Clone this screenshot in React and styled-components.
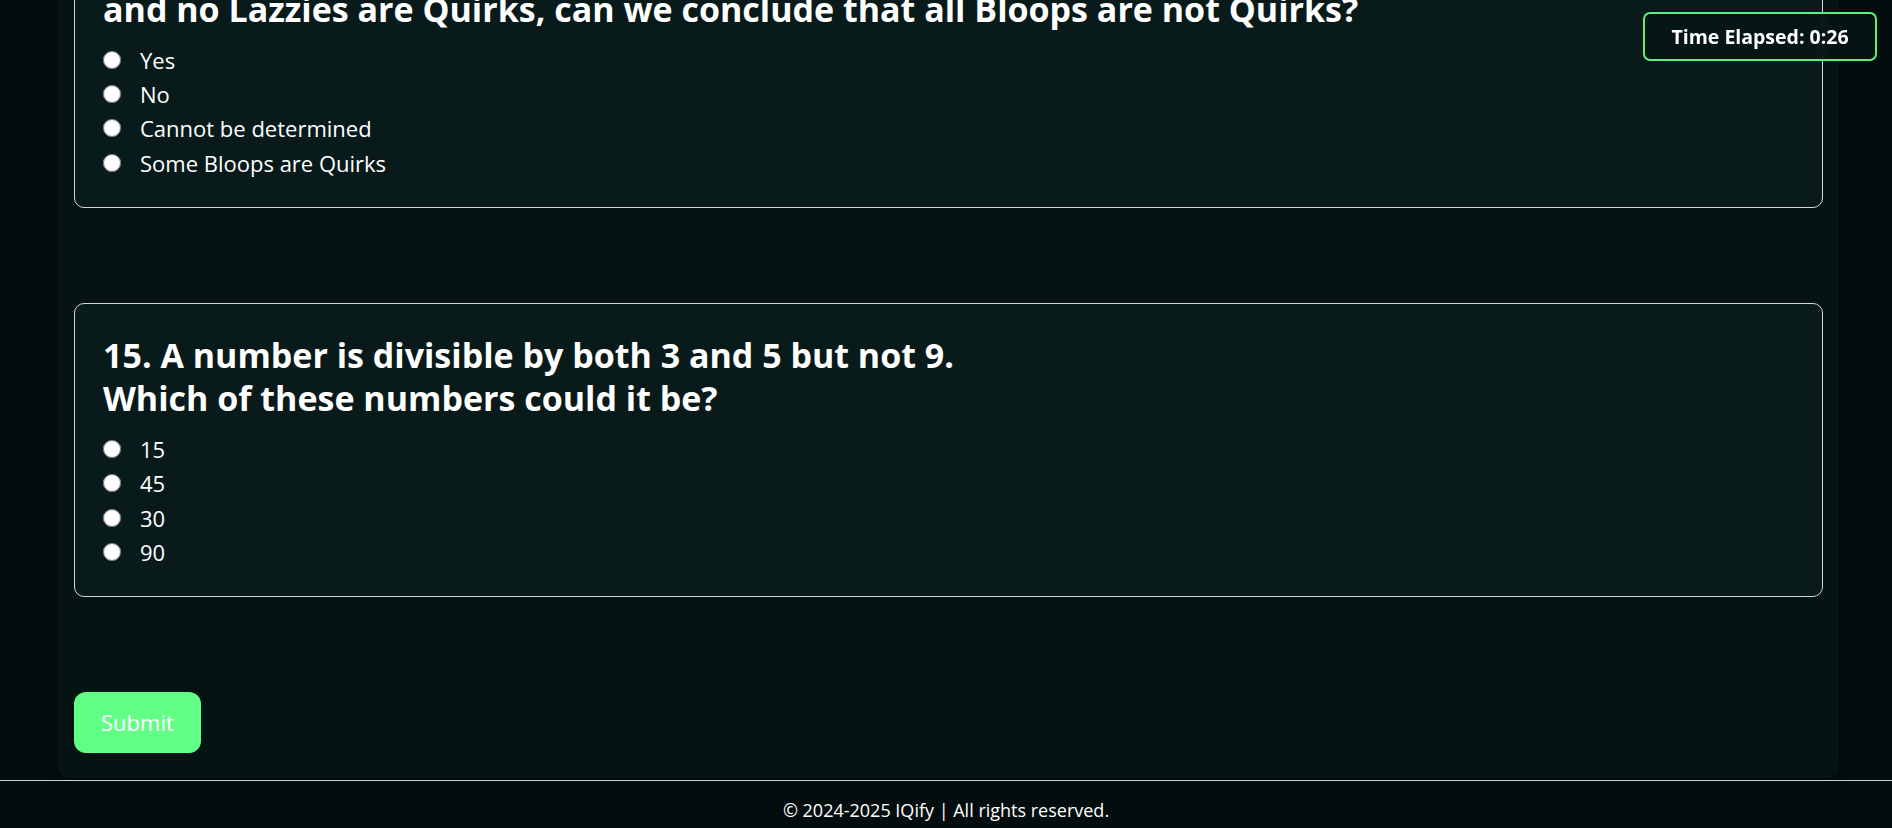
import React from 'react'
import styled, { createGlobalStyle } from 'styled-components'

const GlobalStyle = createGlobalStyle`
  html, body {
    margin: 0;
    padding: 0;
    background: #040d0d;
  }
  body {
    font-family: 'Open Sans', 'Noto Sans', sans-serif;
    color: #ffffff;
  }
`

const Page = styled.div`
  height: 100vh;
  display: flex;
  flex-direction: column;
  justify-content: flex-end;
  overflow: hidden;
  background: #040d0d;
`

const Main = styled.main`
  margin: 0 53px 2px 58px;
  padding: 30px 16px 25px;
  background: #061313;
  border-radius: 10px;
  box-shadow: 0 0 10px rgba(0, 0, 0, 0.55);
  display: flex;
  flex-direction: column;
  gap: 95px;
`

const QuestionCard = styled.div`
  background: #081a1a;
  border: 1px solid #d6d6d6;
  border-radius: 10px;
  padding: 30px 27px 27px 28px;
`

const Title = styled.h2`
  margin: 0 0 12px;
  font-size: 34px;
  line-height: 43px;
  font-weight: 700;
  white-space: pre-line;
`

const Options = styled.div`
  display: flex;
  flex-direction: column;
`

const Option = styled.label`
  display: flex;
  align-items: center;
  gap: 19px;
  height: 34.3px;
  font-size: 22px;
`

const Radio = styled.input.attrs({ type: 'radio' })`
  width: 18px;
  height: 18px;
  margin: 0;
`

const SubmitButton = styled.button`
  align-self: flex-start;
  background: #62ff87;
  color: #ffffff;
  border: none;
  border-radius: 12px;
  padding: 15px 27px 16px;
  font-family: inherit;
  font-size: 22px;
  line-height: 30px;
  cursor: pointer;
`

const Footer = styled.footer`
  border-top: 1px solid #d0d0d0;
  padding: 17px 0 6px;
  text-align: center;
  font-size: 18px;
  line-height: 24px;
  background: #040d0d;
`

const Timer = styled.div`
  position: fixed;
  top: 12px;
  right: 15px;
  width: 234px;
  height: 49px;
  box-sizing: border-box;
  border: 2px solid #5ef07f;
  border-radius: 7px;
  background: rgba(6, 20, 20, 0.75);
  backdrop-filter: blur(6px);
  display: flex;
  align-items: center;
  justify-content: center;
  font-size: 19.5px;
  font-weight: 700;
`

const questions = [
  {
    id: 14,
    text:
      '14. If all Bloops are Razzies and all Razzies are Lazzies,\nand no Lazzies are Quirks, can we conclude that all Bloops are not Quirks?',
    options: ['Yes', 'No', 'Cannot be determined', 'Some Bloops are Quirks'],
  },
  {
    id: 15,
    text: '15. A number is divisible by both 3 and 5 but not 9.\nWhich of these numbers could it be?',
    options: ['15', '45', '30', '90'],
  },
]

const App = () => (
  <>
    <GlobalStyle />
    <Page>
      <Main>
        {questions.map((q) => (
          <QuestionCard key={q.id}>
            <Title>{q.text}</Title>
            <Options>
              {q.options.map((opt) => (
                <Option key={opt}>
                  <Radio name={`q${q.id}`} value={opt} />
                  {opt}
                </Option>
              ))}
            </Options>
          </QuestionCard>
        ))}
        <SubmitButton>Submit</SubmitButton>
      </Main>
      <Footer>© 2024-2025 IQify | All rights reserved.</Footer>
    </Page>
    <Timer>Time Elapsed: 0:26</Timer>
  </>
)

export default App
